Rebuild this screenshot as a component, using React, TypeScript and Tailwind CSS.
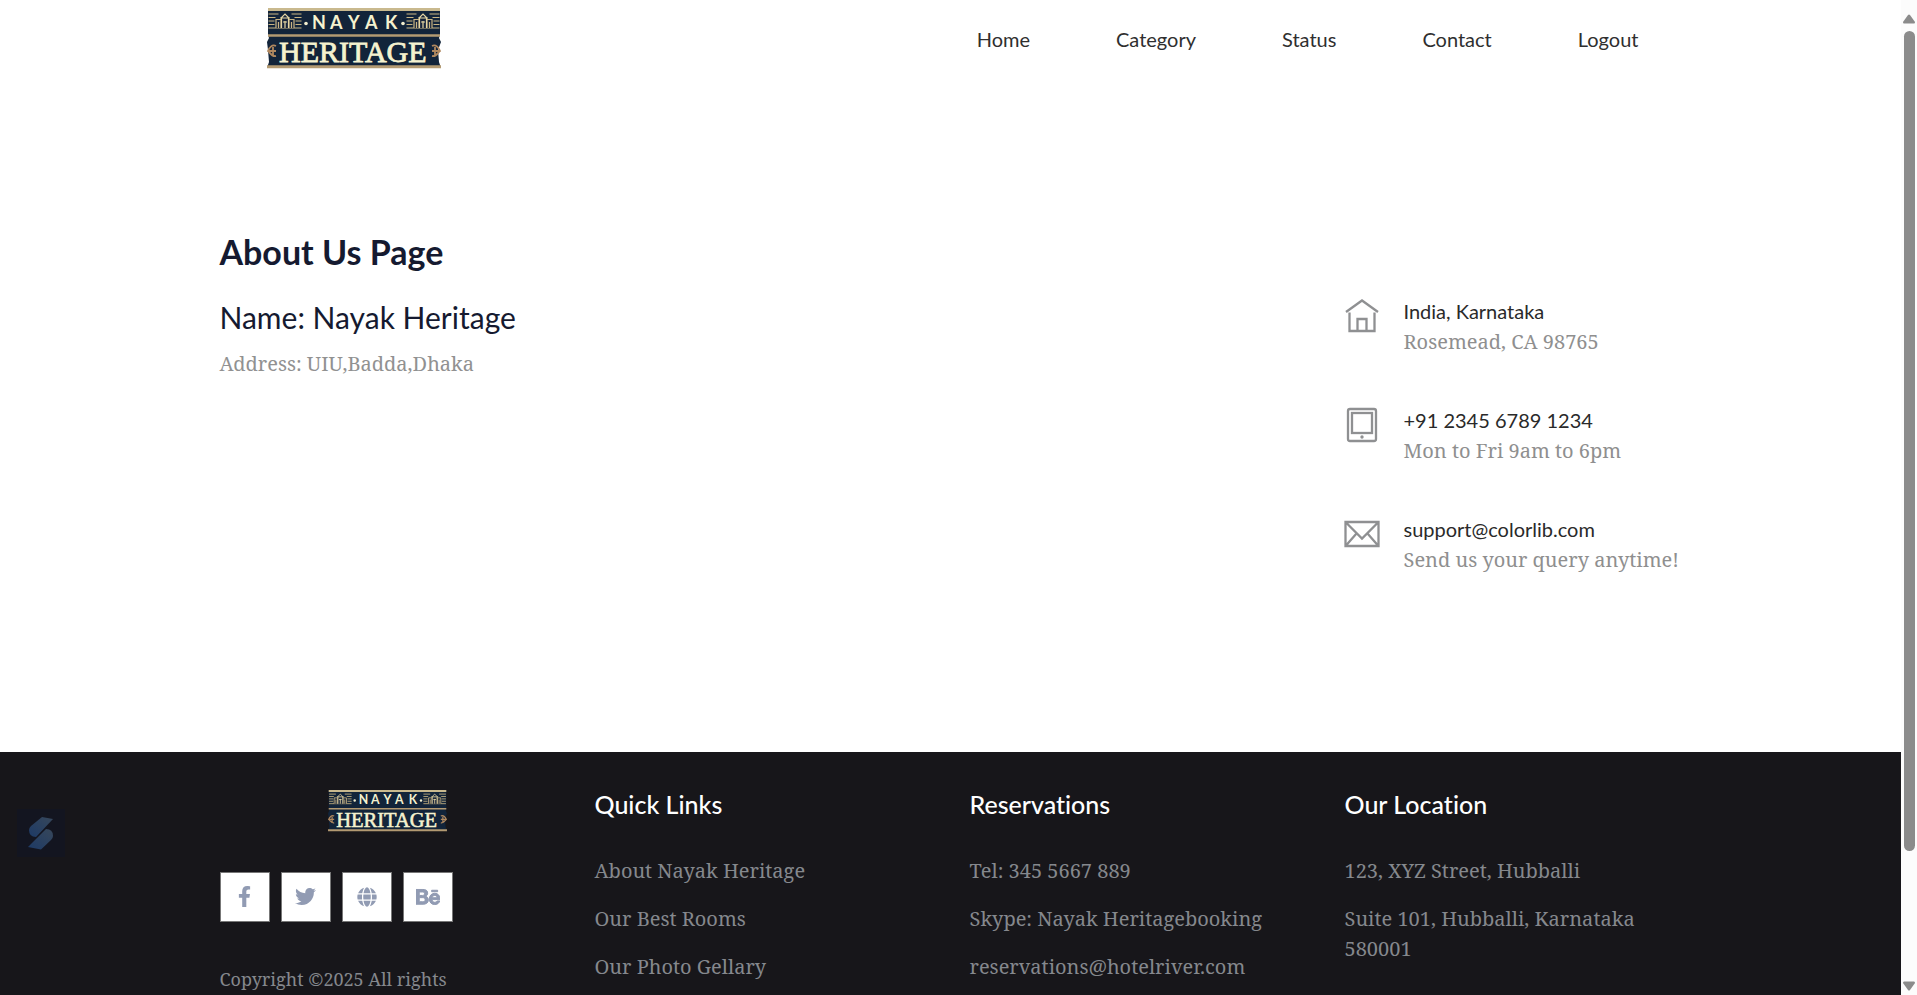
import React from "react";
import { FaFacebookF, FaTwitter, FaGlobe, FaBehance } from "react-icons/fa";

const SERIF = "font-['Noto_Serif','Droid_Serif','Liberation_Serif',serif]";

function House({ x }: { x: number }) {
  return (
    <g transform={`translate(${x} 5)`} stroke="#c9b583" strokeWidth="1.2" fill="none">
      <path d="M0 1H10M0 4.500H7M0 8H6M0 11.500H6M0 15H33M23 1H33M26 4.500H33M27 8H33M27 11.500H33" />
      <path d="M7.500 15V6.500H12.500V15M20.500 15V6.500H25.500V15M10 9V15M23 9V15" fill="#17243a" />
      <path d="M13 15V4.500L16.500 1L20 4.500V15M11.500 5H21.500M16.500 8V15M14.500 9H18.500" stroke="#e6d7a4" fill="#17243a" />
    </g>
  );
}

function Logo({ className }: { className: string }) {
  return (
    <svg viewBox="0 0 174 61" className={className} role="img" aria-label="Nayak Heritage">
      <path d="M1 0H173V27L172 30L174 34L171 42L172 54L174 60H0L2 54L1 42L0 34L2 30L1 27Z" fill="#12243a" />
      <path d="M1 1.500H173" stroke="#c9b98e" strokeWidth="3" />
      <path d="M1 27.500H173" stroke="#b39a72" strokeWidth="2.400" />
      <path d="M0 58.800H174" stroke="#b39a72" strokeWidth="3" />
      <House x={1.5} />
      <House x={139.5} />
      <circle cx="39" cy="15.500" r="1.800" fill="#f3efcf" />
      <circle cx="136" cy="15.500" r="1.800" fill="#f3efcf" />
      <text
        x="45 63 81 98 118"
        y="21"
        fontFamily="Lato, sans-serif"
        fontWeight="700"
        fontSize="18"
        fill="#f5f2cf"
      >
        NAYAK
      </text>
      <text
        x="12"
        y="53.500"
        fontFamily="'Liberation Serif', serif"
        fontSize="30"
        fill="#f5f2cf"
        stroke="#f5f2cf"
        strokeWidth="0.800"
      >
        HERITAGE
      </text>
      <g fill="none" stroke="#b0885f" strokeWidth="1.800">
        <path d="M9 38C5 36 2 40 1 43C3 44 4 49 9 48M2 43H9M6 39V47" />
        <path d="M165 38C169 36 172 40 173 43C171 44 170 49 165 48M172 43H165M168 39V47" />
      </g>
    </svg>
  );
}

const lineIcon = "mt-0.5 size-9 shrink-0";

function HomeIcon() {
  return (
    <svg viewBox="0 0 36 36" className={lineIcon} fill="none" stroke="#8f9092" strokeWidth="2.300" aria-hidden="true">
      <path d="M2 14L18 2.500L34 14M5.500 14.500V33H30.500V14.500M13.500 33V21H22.500V33" />
    </svg>
  );
}

function TabletIcon() {
  return (
    <svg viewBox="0 0 36 36" className={lineIcon} fill="none" stroke="#8f9092" strokeWidth="2.300" aria-hidden="true">
      <rect x="4" y="2" width="28" height="32" rx="2" />
      <rect x="8" y="6" width="20" height="20" />
      <circle cx="18" cy="30" r="1.700" fill="#8f9092" stroke="none" />
    </svg>
  );
}

function MailIcon() {
  return (
    <svg viewBox="0 0 36 36" className={lineIcon} fill="none" stroke="#8f9092" strokeWidth="2.300" aria-hidden="true">
      <path d="M1.500 6H34.500V30H1.500ZM2 6.500L18 22.500L34 6.500M2 29.500L12.500 17.500M34 29.500L23.500 17.500" />
    </svg>
  );
}

const navItems = ["Home", "Category", "Status", "Contact", "Logout"];

const contacts = [
  { Icon: HomeIcon, title: "India, Karnataka", detail: "Rosemead, CA 98765" },
  { Icon: TabletIcon, title: "+91 2345 6789 1234", detail: "Mon to Fri 9am to 6pm" },
  { Icon: MailIcon, title: "support@colorlib.com", detail: "Send us your query anytime!" },
];

const socials = [
  { Icon: FaFacebookF, label: "Facebook", size: "size-[21px]" },
  { Icon: FaTwitter, label: "Twitter", size: "size-[21px]" },
  { Icon: FaGlobe, label: "Website", size: "size-5" },
  { Icon: FaBehance, label: "Behance", size: "size-6 stroke-current stroke-[24]" },
];

function FooterColumn({ title, items }: { title: string; items: React.ReactNode[] }) {
  return (
    <div className="px-[19px] pt-9">
      <h4 className="font-[Lato,sans-serif] text-[25px] leading-8 font-medium text-white [font-variant-ligatures:none]">
        {title}
      </h4>
      <ul className="mt-9 flex flex-col gap-[18px] text-xl leading-[30px]">
        {items.map((item, i) => (
          <li key={i}>{item}</li>
        ))}
      </ul>
    </div>
  );
}

function ScrollRail() {
  return (
    <div aria-hidden="true" className="flex w-4 shrink-0 flex-col items-center bg-[#fcfcfc] pt-3.5 pb-1">
      <svg viewBox="0 0 12 10" className="h-2.5 w-3 shrink-0" fill="#8b8b8b">
        <path d="M5 1Q6 0 7 1L12 8Q12 9.500 11 9.500H1Q0 9.500 0 8Z" />
      </svg>
      <div className="flex w-full flex-1 flex-col items-center py-[7px]">
        <div className="h-[87%] w-[11px] rounded-full bg-[#8b8b8b]" />
      </div>
      <svg viewBox="0 0 12 10" className="h-2.5 w-3 shrink-0" fill="#8b8b8b">
        <path d="M5 9Q6 10 7 9L12 2Q12 .5 11 .5H1Q0 .5 0 2Z" />
      </svg>
    </div>
  );
}

export default function App() {
  return (
    <div className="flex h-screen bg-white">
      <div className={`min-w-0 flex-1 overflow-y-auto [scrollbar-width:none] ${SERIF}`}>
        <header className="mx-auto flex h-[77px] max-w-[1500px] items-center justify-between pr-[19px] pl-[66px]">
          <a href="#home">
            <Logo className="block w-[174px]" />
          </a>
          <nav className="flex font-[Lato,sans-serif] text-xl text-[#2f2f2f]">
            {navItems.map((item) => (
              <a key={item} href={`#${item.toLowerCase()}`} className="px-[43px]">
                {item}
              </a>
            ))}
          </nav>
        </header>

        <main className="mx-auto grid max-w-[1500px] grid-cols-4 pt-[154px] pb-[177px]">
          <section className="col-span-3 px-[19px]">
            <h2 className="font-[Lato,sans-serif] text-[34px] leading-[42px] font-bold text-[#151a30]">About Us Page</h2>
            <h3 className="mt-[26px] font-[Lato,sans-serif] text-[30px] leading-9 text-[#151a30]">Name: Nayak Heritage</h3>
            <p className="mt-3.5 text-xl leading-[30px] text-[#919191]">Address: UIU,Badda,Dhaka</p>
          </section>
          <section className="flex flex-col gap-12 pt-[65px] pl-[18px]">
            {contacts.map(({ Icon, title, detail }) => (
              <div key={title} className="flex gap-6">
                <Icon />
                <div className="min-w-0">
                  <h3 className="font-[Lato,sans-serif] text-xl leading-[30px] text-[#2a2a2a]">{title}</h3>
                  <p className="mt-px text-xl leading-[30px] whitespace-nowrap text-[#8f8f8f]">{detail}</p>
                </div>
              </div>
            ))}
          </section>
        </main>

        <footer className="bg-[#17161a] pb-16 text-[#85888d]">
          <div className="mx-auto grid max-w-[1500px] grid-cols-4">
            <div className="px-[19px] pt-[38px]">
              <Logo className="ml-[108px] w-[119px]" />
              <div className="mt-10 flex gap-[11px]">
                {socials.map(({ Icon, label, size }) => (
                  <a
                    key={label}
                    href={`#${label.toLowerCase()}`}
                    aria-label={label}
                    className="flex size-[50px] items-center justify-center border border-[#777] bg-white text-[#919bb3]"
                  >
                    <Icon className={size} />
                  </a>
                ))}
              </div>
              <p className="mt-[42px] text-lg leading-[30px]">Copyright ©2025 All rights</p>
            </div>
            <FooterColumn
              title="Quick Links"
              items={["About Nayak Heritage", "Our Best Rooms", "Our Photo Gellary"].map((t) => (
                <a href="#links">{t}</a>
              ))}
            />
            <FooterColumn
              title="Reservations"
              items={["Tel: 345 5667 889", "Skype: Nayak Heritagebooking", "reservations@hotelriver.com"]}
            />
            <FooterColumn
              title="Our Location"
              items={[
                "123, XYZ Street, Hubballi",
                <>
                  Suite 101, Hubballi, Karnataka
                  <br />
                  580001
                </>,
              ]}
            />
          </div>
        </footer>
      </div>

      <ScrollRail />

      <button
        type="button"
        aria-label="Open assistant"
        className="fixed bottom-[138px] left-[17px] flex size-12 items-center justify-center bg-[#131520]"
      >
        <svg viewBox="0 0 26 34" className="h-[34px] w-[26px]" aria-hidden="true">
          <defs>
            <linearGradient id="mark" x1="0" y1="1" x2="1" y2="0">
              <stop offset="0" stopColor="#1d3a66" />
              <stop offset="1" stopColor="#37475a" />
            </linearGradient>
          </defs>
          <path d="M14 1L25 3L8 21Q1 21 1 14Q1 12 3 10Z" fill="url(#mark)" />
          <path d="M18 13Q25 13 25 20Q25 22 23 24L13 33.500L0 31Z" fill="url(#mark)" />
        </svg>
      </button>
    </div>
  );
}
